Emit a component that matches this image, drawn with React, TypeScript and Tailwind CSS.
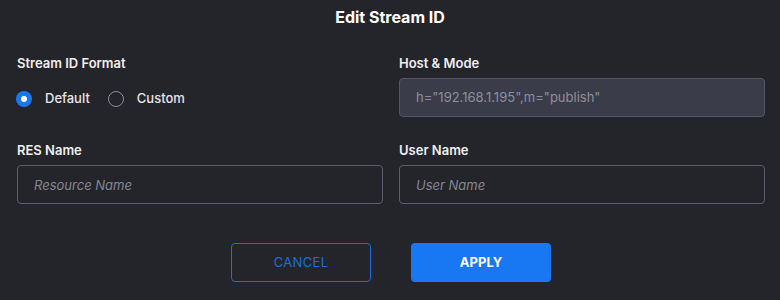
import React, { useState } from "react";

const FONT = { fontFamily: "Inter, 'Open Sans', sans-serif" };

// ── Radio ─────────────────────────────────────────────────────
const Radio: React.FC<{ checked: boolean; label: string; onClick: () => void }> = ({ checked, label, onClick }) => (
  <button type="button" onClick={onClick} className="flex items-center gap-[13px]">
    {checked ? (
      <span className="w-4 h-4 rounded-full bg-[#1877f2] flex items-center justify-center">
        <span className="w-[6px] h-[6px] rounded-full bg-white" />
      </span>
    ) : (
      <span className="w-4 h-4 rounded-full border border-[#8b8c94]" />
    )}
    <span className="text-[13px] font-medium text-[#e6e6ea]">{label}</span>
  </button>
);

// ── Field ─────────────────────────────────────────────────────
const Field: React.FC<{ label: string; children: React.ReactNode }> = ({ label, children }) => (
  <div className="flex flex-col">
    <p className="text-[13px] font-semibold text-[#eeeef0] leading-4 mb-[7px]">{label}</p>
    {children}
  </div>
);

const App: React.FC = () => {
  const [format, setFormat] = useState<"default" | "custom">("default");

  return (
    <div style={FONT} className="w-[780px] h-[300px] bg-[#24252b] overflow-hidden">
      <h1 className="text-center text-white text-[16px] font-bold pt-[7px] leading-5">Edit Stream ID</h1>

      <div className="grid grid-cols-2 gap-x-4 pl-[17px] pr-[15px] mt-[28px]">
        <div className="flex flex-col">
          <p className="text-[13px] font-semibold text-[#eeeef0] leading-4">Stream ID Format</p>
          <div className="flex items-center gap-[18px] mt-[18px] ml-[-1px]">
            <Radio checked={format === "default"} label="Default" onClick={() => setFormat("default")} />
            <Radio checked={format === "custom"} label="Custom" onClick={() => setFormat("custom")} />
          </div>
        </div>
        <Field label="Host & Mode">
          <div className="h-[39px] rounded border border-[#54556a] bg-[#3b3c49] flex items-center px-4 text-[13px] text-[#8e8f9c]">
            h="192.168.1.195",m="publish"
          </div>
        </Field>
      </div>

      <div className="grid grid-cols-2 gap-x-4 pl-[17px] pr-[15px] mt-[25px]">
        <Field label="RES Name">
          <input
            placeholder="Resource Name"
            className="h-[39px] rounded border border-[#5c5d6e] bg-transparent px-4 text-[13px] italic text-white placeholder:text-[#858692] outline-none"
          />
        </Field>
        <Field label="User Name">
          <input
            placeholder="User Name"
            className="h-[39px] rounded border border-[#5c5d6e] bg-transparent px-4 text-[13px] italic text-white placeholder:text-[#858692] outline-none"
          />
        </Field>
      </div>

      <div className="flex justify-center gap-10 mt-[39px] pl-[2px]">
        <button className="w-[140px] h-[39px] rounded border border-[#1a6fd9] text-[#1a6fd9] text-[13px] tracking-wide">
          CANCEL
        </button>
        <button className="w-[140px] h-[39px] rounded bg-[#1877f2] text-white text-[13px] font-bold">
          APPLY
        </button>
      </div>
    </div>
  );
};

export default App;
